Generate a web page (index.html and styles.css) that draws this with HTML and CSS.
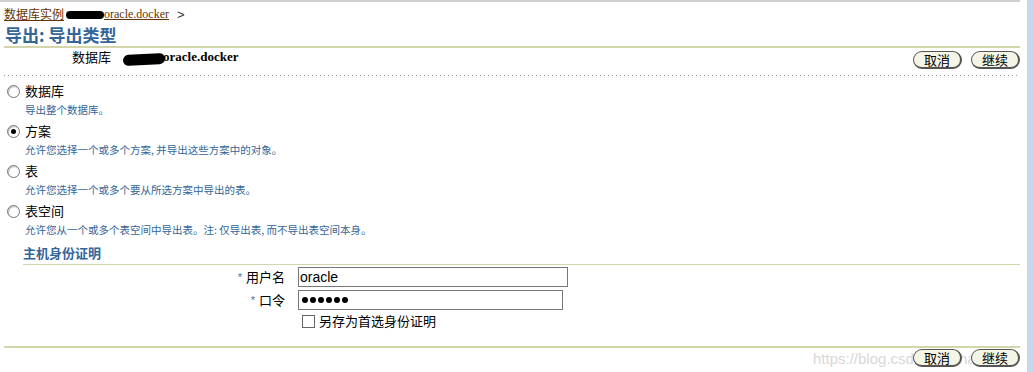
FILE: index.html
```html
<!DOCTYPE html>
<html>
<head>
<meta charset="utf-8">
<link rel="stylesheet" href="styles.css">
</head>
<body>
<div class="page">
  <div class="topline"></div>
  <div class="crumbs"><a class="crumb" href="#"><span class="crumb-cn">数据库实例</span><span class="redact"></span>oracle.docker</a><span class="sep">&gt;</span></div>
  <h1 class="title">导出: 导出类型</h1>
  <div class="infobar">
    <div class="info"><span class="info-label">数据库</span><span class="redact2"></span><span class="info-value">oracle.docker</span></div>
    <div class="btns"><button class="btn">取消</button><button class="btn">继续</button></div>
  </div>
  <div class="dots"></div>
  <div class="options">
    <div class="opt">
      <label class="opt-row"><span class="radio"></span><span class="opt-label">数据库</span></label>
      <div class="opt-desc">导出整个数据库。</div>
    </div>
    <div class="opt">
      <label class="opt-row"><span class="radio on"></span><span class="opt-label">方案</span></label>
      <div class="opt-desc">允许您选择一个或多个方案, 并导出这些方案中的对象。</div>
    </div>
    <div class="opt">
      <label class="opt-row"><span class="radio"></span><span class="opt-label">表</span></label>
      <div class="opt-desc">允许您选择一个或多个要从所选方案中导出的表。</div>
    </div>
    <div class="opt">
      <label class="opt-row"><span class="radio"></span><span class="opt-label">表空间</span></label>
      <div class="opt-desc">允许您从一个或多个表空间中导出表。注: 仅导出表, 而不导出表空间本身。</div>
    </div>
  </div>
  <h2 class="sub">主机身份证明</h2>
  <div class="form">
    <div class="frow">
      <div class="flabel"><span class="star">*</span>用户名</div>
      <div class="input user">oracle</div>
    </div>
    <div class="frow">
      <div class="flabel"><span class="star">*</span>口令</div>
      <div class="input pass"><span class="pdot"></span><span class="pdot"></span><span class="pdot"></span><span class="pdot"></span><span class="pdot"></span><span class="pdot"></span></div>
    </div>
    <div class="frow">
      <div class="flabel"></div>
      <label class="chk-row"><span class="chk"></span>另存为首选身份证明</label>
    </div>
  </div>
  <div class="bottom">
    <span class="watermark">https://blog.csdn.net/shaxxwei</span>
    <div class="btns"><button class="btn">取消</button><button class="btn">继续</button></div>
  </div>
</div>
<div class="scrollstrip"></div>
</body>
</html>
```
FILE: styles.css
```css
html, body {
  margin: 0;
  padding: 0;
  background: #fff;
  width: 1033px;
  height: 372px;
  overflow: hidden;
  font-family: "Noto Sans CJK SC", "Liberation Sans", sans-serif;
  color: #000;
}
.page {
  width: 1020px;
  position: relative;
}
.scrollstrip {
  position: absolute;
  left: 1027px;
  top: 0;
  width: 6px;
  height: 372px;
  background: #c4d9ee;
}
.topline {
  height: 2px;
  background: #cfcfcf;
  width: 1020px;
}
.crumbs {
  display: flex;
  align-items: baseline;
  margin: 4px 0 0 4px;
  height: 16px;
  line-height: 16px;
}
.crumb {
  color: #663300;
  text-decoration: underline;
  font-family: "Liberation Serif", "Noto Sans CJK SC", serif;
  font-size: 12px;
  display: flex;
  align-items: center;
}
.crumb-cn {
  font-family: "Noto Sans CJK SC", sans-serif;
  font-size: 12px;
}
.redact {
  display: inline-block;
  width: 38px;
  height: 8px;
  background: #000;
  border-radius: 5px;
  margin: 1px 0 0 2px;
}
.sep {
  margin-left: 8px;
  color: #333;
  font-family: "Liberation Sans", sans-serif;
  font-size: 13px;
}
.title {
  margin: 2px 0 0 5px;
  font-size: 17px;
  line-height: 22px;
  height: 22px;
  color: #336699;
  font-weight: bold;
  font-family: "Noto Sans CJK SC", sans-serif;
}
.infobar {
  margin-left: 4px;
  border-top: 2px solid #d2d6aa;
  display: flex;
  justify-content: space-between;
  align-items: flex-start;
  height: 22px;
}
.info {
  margin: 1px 0 0 68px;
  display: flex;
  align-items: center;
  font-size: 13px;
  line-height: 16px;
}
.info-label { margin-right: 12px; }
.redact2 {
  display: inline-block;
  width: 42px;
  height: 11px;
  background: #000;
  border-radius: 6px;
  transform: rotate(-3deg);
  margin-top: 4px;
}
.info-value {
  font-family: "Liberation Serif", serif;
  font-weight: bold;
  font-size: 13px;
  margin-left: -2px;
}
.btns {
  display: flex;
  gap: 9px;
  margin-top: 3px;
  position: relative;
  z-index: 1;
}
.btn {
  width: 49px;
  height: 18px;
  padding: 0;
  border: 1px solid #555;
  border-right-width: 2px;
  border-bottom-width: 2px;
  border-radius: 9px;
  background: #f5f5e6;
  font-family: "Noto Sans CJK SC", sans-serif;
  font-size: 13px;
  line-height: 14px;
  color: #000;
}
.dots {
  margin: 5px 0 0 4px;
  height: 1px;
  background-image: linear-gradient(to right, #8e99a6 1px, transparent 1px);
  background-size: 4px 1px;
}
.options {
  margin-top: 6px;
  margin-left: 7px;
  display: flex;
  flex-direction: column;
  gap: 5px;
}
.opt { height: 35px; }
.opt-row {
  display: flex;
  align-items: center;
  height: 18px;
  gap: 5px;
}
.radio {
  width: 11px;
  height: 11px;
  border: 1px solid #777;
  border-radius: 50%;
  background: #fff;
  position: relative;
  box-shadow: inset 1px 1px 1px #bbb;
}
.radio.on::after {
  content: "";
  position: absolute;
  left: 3px;
  top: 3px;
  width: 5px;
  height: 5px;
  border-radius: 50%;
  background: #000;
}
.opt-label {
  font-size: 13px;
  line-height: 16px;
}
.opt-desc {
  margin: 3px 0 0 18px;
  font-size: 10.5px;
  line-height: 14px;
  color: #336699;
}
.sub {
  margin: 7px 0 0 23px;
  font-size: 13px;
  line-height: 18px;
  height: 18px;
  color: #336699;
  font-weight: bold;
  border-bottom: 1px solid #d2d6aa;
  padding-bottom: 2px;
}
.form {
  margin-top: 2px;
  display: flex;
  flex-direction: column;
  gap: 3px;
}
.frow {
  display: flex;
  align-items: center;
}
.flabel {
  width: 298px;
  text-align: right;
  font-size: 13px;
  line-height: 16px;
  padding-right: 13px;
  box-sizing: border-box;
}
.star {
  color: #4a6fa5;
  font-family: "Liberation Sans", sans-serif;
  font-size: 11px;
  margin-right: 4px;
  vertical-align: 1px;
}
.input {
  height: 20px;
  box-sizing: border-box;
  border: 1px solid #777;
  font-family: "Liberation Sans", sans-serif;
  font-size: 14px;
  line-height: 18px;
  padding-left: 1px;
}
.input.user { width: 270px; }
.input.pass {
  width: 265px;
  display: flex;
  align-items: center;
  gap: 2px;
  padding-left: 3px;
}
.pdot {
  width: 6px;
  height: 6px;
  border-radius: 50%;
  background: #000;
}
.chk-row {
  display: flex;
  align-items: center;
  margin-left: 4px;
  font-size: 13px;
  line-height: 16px;
  gap: 4px;
}
.chk {
  width: 11px;
  height: 11px;
  border: 1px solid #666;
  background: #fff;
}
.bottom {
  margin: 17px 0 0 4px;
  border-top: 2px solid #d2d6aa;
  display: flex;
  justify-content: flex-end;
  position: relative;
  height: 24px;
}
.bottom .btns { margin-top: 1px; }
.watermark {
  position: absolute;
  left: 809px;
  top: 1px;
  font-family: "Liberation Sans", sans-serif;
  font-size: 15px;
  color: #d8d8d8;
  line-height: 20px;
}
```
